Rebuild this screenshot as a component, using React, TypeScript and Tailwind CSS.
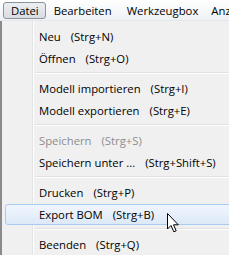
import React from 'react';

interface Item {
    label: string;
    shortcut: string;
    disabled?: boolean;
    active?: boolean;
}

const groups: Item[][] = [
    [
        { label: 'Neu', shortcut: '(Strg+N)' },
        { label: 'Öffnen', shortcut: '(Strg+O)' },
    ],
    [
        { label: 'Modell importieren', shortcut: '(Strg+I)' },
        { label: 'Modell exportieren', shortcut: '(Strg+E)' },
    ],
    [
        { label: 'Speichern', shortcut: '(Strg+S)', disabled: true },
        { label: 'Speichern unter ...', shortcut: '(Strg+Shift+S)' },
    ],
    [
        { label: 'Drucken', shortcut: '(Strg+P)' },
        { label: 'Export BOM', shortcut: '(Strg+B)', active: true },
    ],
    [{ label: 'Beenden', shortcut: '(Strg+Q)' }],
];

const Cursor = () => (
    <svg width="14" height="22" viewBox="0 0 14 22" className="absolute left-[166px] top-[212px]">
        <path
            d="M1.5 1.5 L1.5 17 L5 13.5 L7.8 19.8 L10.2 18.8 L7.5 12.8 L12.3 12.8 Z"
            fill="#fff"
            stroke="#000"
            strokeWidth="1"
            strokeLinejoin="miter"
        />
    </svg>
);

const MenuRow = ({ item }: { item: Item }) => (
    <div className="relative h-[22px] flex items-center">
        {item.active && (
            <div className="absolute left-[3px] right-[-6px] top-[1px] bottom-[0px] rounded-[3px] border border-[#a8cbf1] bg-gradient-to-b from-[#f1f6fd] to-[#dde9f8]" />
        )}
        <div className={`relative pl-[37px] pt-[2px] flex ${item.disabled ? 'text-[#8d8d8d]' : 'text-black'}`}>
            <span>{item.label}</span>
            <span className="ml-[10px]">{item.shortcut}</span>
        </div>
    </div>
);

const Separator = () => (
    <div className="h-[8px] flex flex-col justify-center pl-[33px]">
        <div className="h-px bg-[#e0e0e0]" />
        <div className="h-px bg-white" />
    </div>
);

export default function App() {
    return (
        <div className="relative w-[229px] h-[255px] overflow-hidden bg-[#f0f0f0] text-[11.3px] leading-none" style={{ fontFamily: '"Segoe UI", "Open Sans", sans-serif' }}>
            {/* Menüleiste */}
            <div className="h-[21px] flex items-center bg-gradient-to-b from-white to-[#eef1f5] border-b border-[#e4e7ec] whitespace-nowrap">
                <div className="ml-[3px] h-[17px] pl-[7px] pr-[6px] pt-[1px] flex items-center rounded-[3px] border border-[#8d939a] bg-gradient-to-b from-[#eceff2] to-[#d9dde2]">
                    Datei
                </div>
                <span className="ml-[8px] pt-[1px]">Bearbeiten</span>
                <span className="ml-[15px] pt-[1px]">Werkzeugbox</span>
                <span className="ml-[13px] pt-[1px]">Anzeige</span>
            </div>

            {/* Dropdown */}
            <div className="relative border-l-[2px] border-[#8a8a8a] pt-[4px] whitespace-nowrap">
                <div className="absolute left-[30px] top-0 bottom-0 w-px bg-[#e2e3e3]" />
                <div className="absolute left-[31px] top-0 bottom-0 w-px bg-white" />
                {groups.map((group, gi) => (
                    <div key={gi}>
                        {gi > 0 && <Separator />}
                        {group.map(item => (
                            <MenuRow key={item.label} item={item} />
                        ))}
                    </div>
                ))}
            </div>

            <Cursor />
        </div>
    );
}
